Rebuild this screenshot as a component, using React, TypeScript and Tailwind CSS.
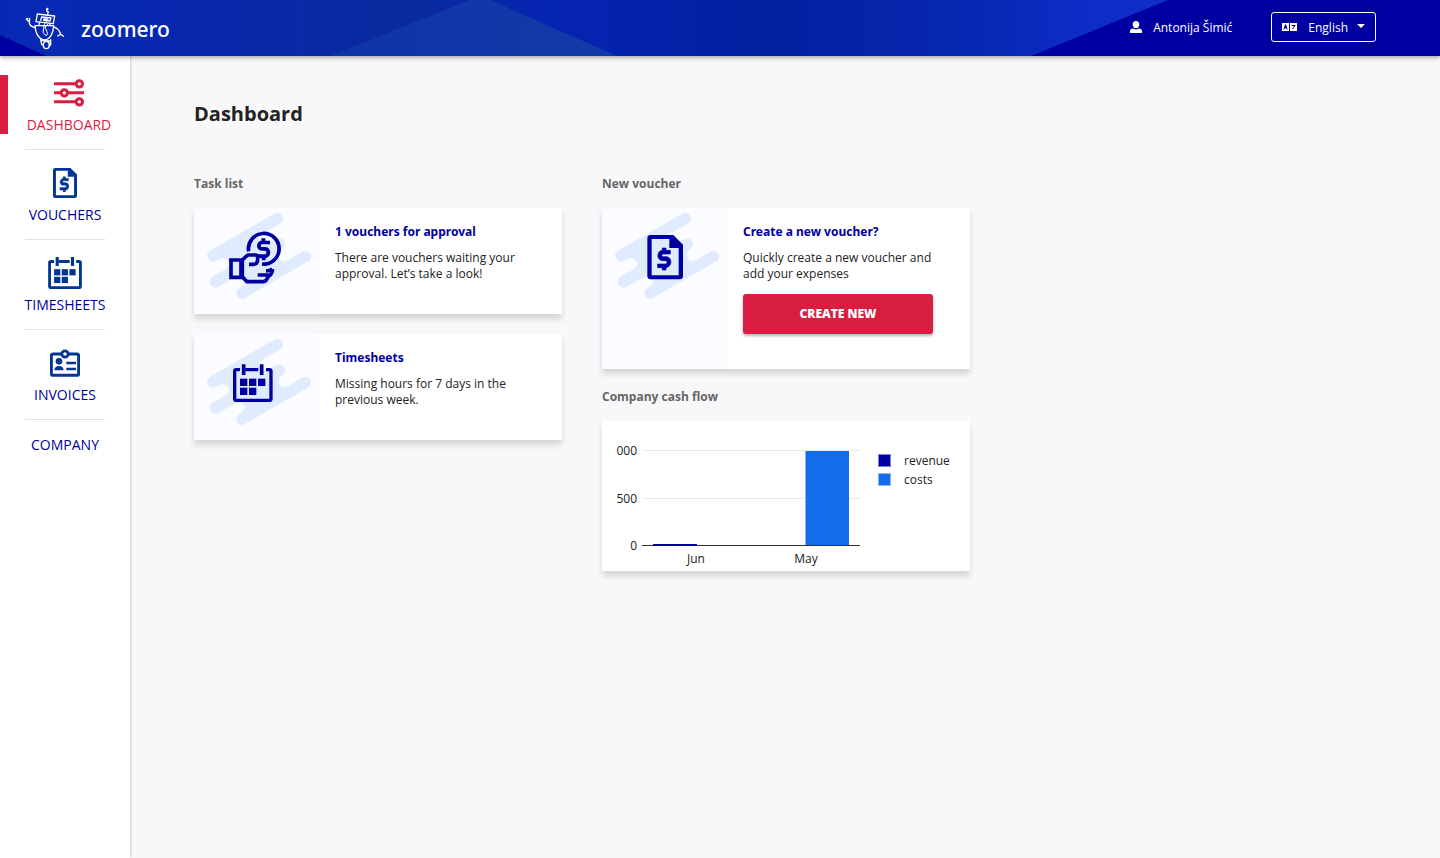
import type { ReactNode } from "react";

function RobotLogo() {
  return (
    <svg viewBox="72 21 126 129" className="h-[43px] w-[42px]" fill="none" stroke="#fff" strokeWidth="4" strokeLinecap="round" strokeLinejoin="round" aria-hidden="true">
      <path d="M143 42 L145 36 L140 33 L142 27" />
      <circle cx="142" cy="27" r="1.6" />
      <path d="M112 42 L164 48 L160 71 L108 65 Z" />
      <path d="M122 61 L125 51 L153 54 L150 63 L131 61 L132 57 L143 58" />
      <path d="M119 67 L117 74 M150 71 L150 76" />
      <path d="M105 77 H161 C160 98 151 119 133 120 C114 117 106 96 105 77 Z" />
      <path d="M142 62 C135 68 133 72 132 78 M132 78 L129 98 L139 107 L143 101 L134 78 M144 72 L136 80" strokeWidth="3" />
      <path d="M105 83 C94 80 87 75 88 66 M88 66 L79 57 M88 66 L89 56 M79 57 L84 55" />
      <path d="M160 81 C171 82 180 94 182 103 M182 103 L173 108 M182 103 L190 109" />
      <path d="M122 118 L125 133 L130 136 M122 121 L149 123 M152 119 L152 134 L147 139" />
      <ellipse cx="139" cy="135" rx="9" ry="11" />
      <path d="M134 124 C140 122 145 125 147 130" />
    </svg>
  );
}

function HeaderBackdrop() {
  return (
    <svg className="absolute inset-0 h-full w-full" viewBox="0 0 1440 56" preserveAspectRatio="none" aria-hidden="true">
      <defs>
        <linearGradient id="band" gradientUnits="userSpaceOnUse" x1="0" y1="0" x2="1168" y2="0">
          <stop offset="0" stopColor="#0629b5" />
          <stop offset="0.14" stopColor="#0728ae" />
          <stop offset="0.36" stopColor="#0b2a9e" />
          <stop offset="0.47" stopColor="#0424b2" />
          <stop offset="0.66" stopColor="#0320a0" />
          <stop offset="0.82" stopColor="#0627b0" />
          <stop offset="0.93" stopColor="#0e2cc6" />
          <stop offset="1" stopColor="#102fca" />
        </linearGradient>
        <linearGradient id="peak" x1="0" y1="0" x2="1" y2="0">
          <stop offset="0" stopColor="#0d34a6" />
          <stop offset="1" stopColor="#123ba9" />
        </linearGradient>
      </defs>
      <rect width="1440" height="56" fill="#0000a0" />
      <path d="M0 0 H1168 L1031 56 H46 L0 35 Z" fill="url(#band)" />
      <path d="M470 0 H490 L617 56 H330 Z" fill="url(#peak)" />
    </svg>
  );
}

function SlidersIcon() {
  return (
    <svg viewBox="162 56 90 83" className="h-7 w-[30px]" fill="none" stroke="currentColor" strokeWidth="9" aria-hidden="true">
      <path d="M162 70 H228 M162 97 H184 M203 97 H252 M162 124 H228" />
      <circle cx="238" cy="70" r="9.5" />
      <circle cx="193" cy="97" r="9.5" />
      <circle cx="238" cy="124" r="9.5" />
    </svg>
  );
}

function FileDollarShape() {
  return (
    <>
      <path fillRule="evenodd" fill="currentColor" d="M167 105 H235 L264 134 V228 A10 10 0 0 1 254 238 H167 A10 10 0 0 1 157 228 V115 A10 10 0 0 1 167 105 Z M170 117 V226 H251 V144 H223 V117 Z" />
      <path fill="currentColor" stroke="currentColor" strokeWidth="2" d="M202 144 H213 V151 H226 V162 H205 C199 162 199 170 205 170 H213 C232 170 233 200 213 203 V210 H202 V203 H188 V192 H211 C218 192 218 182 211 182 H204 C184 182 184 153 202 151 Z" />
    </>
  );
}

function CalendarShape() {
  return (
    <g fill="none" stroke="currentColor">
      <path strokeWidth="10" d="M150 134 H139 Q134 134 134 139 V221 Q134 226 139 226 H238 Q243 226 243 221 V139 Q243 134 238 134 H228 M166 134 H205" />
      <path strokeWidth="11" d="M161 118 V150 M215 118 V150" />
      <g fill="currentColor" stroke="none">
        <rect x="150" y="161" width="22" height="22" />
        <rect x="177" y="161" width="22" height="22" />
        <rect x="204" y="161" width="22" height="22" />
        <rect x="150" y="188" width="22" height="22" />
        <rect x="177" y="188" width="22" height="22" />
      </g>
    </g>
  );
}

function HandCoinShape() {
  return (
    <g fill="none" stroke="currentColor" strokeWidth="11" strokeLinejoin="round">
      <path d="M176 154 A46 46 0 1 1 216 192" />
      <path d="M123 180 H157 V232 H123 Z M153 180 V232" strokeLinejoin="miter" />
      <path d="M157 180 L173 165 H197 Q203 165 203 172 V179 Q203 193 189 193 H177" />
      <path d="M157 230 L171 245 H219 Q226 245 230 238 L236 228 Q246 224 248 207" />
      <path d="M203 225 H236 M228 213 Q240 213 247 207" />
      <path fill="currentColor" stroke="none" d="M214 115 H226 V122 H240 V133 H217 C211 133 211 141 217 141 H226 C246 143 245 171 227 174 V181 H215 V174 H203 V163 H224 C231 163 231 152 224 152 H216 C196 151 197 124 214 122 Z" />
    </g>
  );
}

function BadgeIcon() {
  return (
    <svg viewBox="150 327 90 84" className="h-7 w-[30px]" fill="none" stroke="currentColor" strokeWidth="9" aria-hidden="true">
      <path d="M184 342 H159 Q154 342 154 347 V401 Q154 406 159 406 H231 Q236 406 236 401 V347 Q236 342 231 342 H206" />
      <circle cx="195" cy="342" r="9.5" strokeWidth="8" />
      <path d="M199 369 H228 M199 387 H228" strokeWidth="8" />
      <circle cx="177" cy="364" r="10" fill="currentColor" stroke="none" />
      <path d="M163 391 Q164 378 177 378 Q190 378 191 391 Z" fill="currentColor" stroke="none" />
    </svg>
  );
}

function FileIcon() {
  return (
    <svg viewBox="157 105 107 133" className="h-[30px] w-6" aria-hidden="true">
      <FileDollarShape />
    </svg>
  );
}

function CalendarIcon() {
  return (
    <svg viewBox="129 118 119 113" className="h-8 w-[34px]" aria-hidden="true">
      <CalendarShape />
    </svg>
  );
}

function Illustration({ children }: { children: ReactNode }) {
  return (
    <div className="w-[125px] shrink-0 bg-[#fbfcff]">
      <svg viewBox="12 27 375 318" className="h-[106px] w-[125px] text-[#0000a0]" aria-hidden="true">
        <path
          fill="#e0ebff"
          d="M60 155 L253 44 A17 17 0 0 1 271 73 L212 107 Q200 118 212 124 L225 138 L258 121 A17 17 0 0 1 277 150 Q262 162 268 176 Q276 190 294 184 L337 158 A17 17 0 0 1 355 187 L163 298 A17 17 0 0 1 146 269 Q166 258 164 244 Q160 230 140 234 L85 263 A17 17 0 0 1 67 233 L104 212 Q120 203 117 190 Q110 175 92 178 L77 185 A17 17 0 0 1 60 155 Z"
        />
        {children}
      </svg>
    </div>
  );
}

function NavItem({ label, icon, active = false, last = false }: { label: string; icon?: ReactNode; active?: boolean; last?: boolean }) {
  return (
    <li>
      <a href="#" aria-current={active ? "page" : undefined} className={active ? "flex pt-[15px] pb-[10px] text-[#d91e42]" : "flex pt-[15px] pb-[10px] text-[#0000a0]"}>
        {active && <span className="h-[59px] w-2 shrink-0 bg-[#d91e42]" />}
        <span className="flex grow flex-col items-center">
          {icon && <span className={active ? "flex h-9 items-center" : "flex h-9 items-center text-[#003594]"}>{icon}</span>}
          <span className={icon ? "text-sm leading-7" : "text-sm leading-5"}>{label}</span>
        </span>
      </a>
      {!last && <div className="mx-[25px] h-px bg-[#dee2ea]" />}
    </li>
  );
}

const cardClass = "flex bg-white shadow-[0_5px_6px_rgba(0,0,0,0.14)]";

function InfoCard({ art, title, text, children }: { art: ReactNode; title: string; text: string; children?: ReactNode }) {
  return (
    <article className={cardClass}>
      <Illustration>{art}</Illustration>
      <div className={children ? "px-4 pt-4 pb-[35px]" : "px-4 pt-4"}>
        <h3 className="font-['Noto_Sans',sans-serif] text-xs leading-4 font-bold text-[#0000a0]">{title}</h3>
        <p className="mt-[10px] max-w-[200px] text-xs leading-4 text-[#222]">{text}</p>
        {children}
      </div>
    </article>
  );
}

function CashFlowChart() {
  return (
    <svg viewBox="0 0 368 150" className="w-full" role="img" aria-label="Company cash flow" fontSize="12" fill="#222">
      <path d="M40 29.5 H258 M40 77.5 H258" stroke="#e8e8e8" fill="none" />
      <rect x="203" y="30" width="44" height="95" fill="#8ab6f5" />
      <rect x="204" y="30" width="43" height="95" fill="#136cec" />
      <path d="M40 124.5 H258" stroke="#333" />
      <rect x="51" y="123" width="44" height="2" fill="#0000a0" />
      <g textAnchor="end">
        <text x="35" y="34">000</text>
        <text x="35" y="82">500</text>
        <text x="35" y="129">0</text>
      </g>
      <g textAnchor="middle">
        <text x="94" y="142">Jun</text>
        <text x="204" y="142">May</text>
      </g>
      <rect x="276.5" y="33.5" width="12" height="12" fill="#0000a0" stroke="#8080d0" />
      <rect x="276.5" y="52.5" width="12" height="12" fill="#136cec" stroke="#8ab6f5" />
      <text x="302" y="44">revenue</text>
      <text x="302" y="63">costs</text>
    </svg>
  );
}

export default function App() {
  return (
    <div className="flex min-h-screen flex-col bg-[#f8f8fa] font-['Open_Sans','Noto_Sans',sans-serif] text-[#222]">
      <header className="relative z-10 h-14 shadow-[0_2px_4px_rgba(0,0,0,0.3)]">
        <HeaderBackdrop />
        <div className="relative flex h-full items-center justify-between pr-16 pl-6 text-white">
          <a href="#" className="flex items-center">
            <RobotLogo />
            <span className="ml-[15px] pt-[2px] font-['Noto_Sans',sans-serif] text-[21px] leading-7 font-medium">zoomero</span>
          </a>
          <div className="flex items-center pb-[2px]">
            <svg viewBox="0 0 12 12" className="mr-[11px] size-3" fill="#fff" aria-hidden="true">
              <path d="M6 0 C8.3 0 9.3 1.6 9.3 3.5 C9.3 5.7 7.8 7.3 6 7.3 C4.2 7.3 2.7 5.7 2.7 3.5 C2.7 1.6 3.7 0 6 0 Z M0 12 V10 C0 8.3 1.3 7.7 3.2 7.5 Q6 9.5 8.8 7.5 C10.700 7.7 12 8.3 12 10 V12 Z" />
            </svg>
            <span className="pt-px text-xs font-medium">Antonija Šimić</span>
            <button type="button" className="ml-[39px] flex h-[30px] items-center rounded-[3px] border border-white px-[10px] text-xs font-medium">
              <svg viewBox="0 0 15 8" className="mr-[11px] h-2 w-[15px]" aria-hidden="true">
                <path fill="#fff" fillRule="evenodd" d="M0 0 H7 V8 H0 Z M8 0 H15 V8 H8 Z M3 1.5 L1.3 6.5 H2.3 L2.7 5.3 H4.3 L4.7 6.5 H5.7 L4 1.5 Z M9.5 2 V3 H12 L10 6 H11 L13.5 2.5 V2 Z" />
              </svg>
              <span className="pt-px">English</span>
              <svg viewBox="0 0 8 4" className="mb-[2px] ml-[9px] h-1 w-2" aria-hidden="true">
                <path d="M0 0 H8 L4 4 Z" fill="#fff" />
              </svg>
            </button>
          </div>
        </div>
      </header>
      <div className="flex grow">
        <nav className="w-[130px] shrink-0 bg-white pt-1 shadow-[0_0_3px_rgba(0,0,0,0.3)]">
          <ul>
            <NavItem label="DASHBOARD" icon={<SlidersIcon />} active />
            <NavItem label="VOUCHERS" icon={<FileIcon />} />
            <NavItem label="TIMESHEETS" icon={<CalendarIcon />} />
            <NavItem label="INVOICES" icon={<BadgeIcon />} />
            <NavItem label="COMPANY" last />
          </ul>
        </nav>
        <main className="grow px-16 pt-11">
          <h1 className="text-xl leading-7 font-bold">Dashboard</h1>
          <div className="mt-12 flex items-start gap-10">
            <section className="w-[368px]">
              <h2 className="text-xs leading-4 font-bold text-[#666]">Task list</h2>
              <div className="mt-4 flex flex-col gap-5">
                <InfoCard art={<g transform="translate(0 3)"><HandCoinShape /></g>} title="1 vouchers for approval" text="There are vouchers waiting your approval. Let’s take a look!" />
                <InfoCard art={<CalendarShape />} title="Timesheets" text="Missing hours for 7 days in the previous week." />
              </div>
            </section>
            <section className="w-[368px]">
              <h2 className="text-xs leading-4 font-bold text-[#666]">New voucher</h2>
              <div className="mt-4">
                <InfoCard art={<g transform="translate(-9 3)"><FileDollarShape /></g>} title="Create a new voucher?" text="Quickly create a new voucher and add your expenses">
                  <button type="button" className="mt-3 h-10 w-[190px] rounded-[3px] bg-[#d91e42] text-xs font-extrabold text-white shadow-[0_2px_3px_rgba(0,0,0,0.3)]">
                    CREATE NEW
                  </button>
                </InfoCard>
              </div>
              <h2 className="mt-5 text-xs leading-4 font-bold text-[#666]">Company cash flow</h2>
              <div className={"mt-4 " + cardClass}>
                <CashFlowChart />
              </div>
            </section>
          </div>
        </main>
      </div>
    </div>
  );
}
